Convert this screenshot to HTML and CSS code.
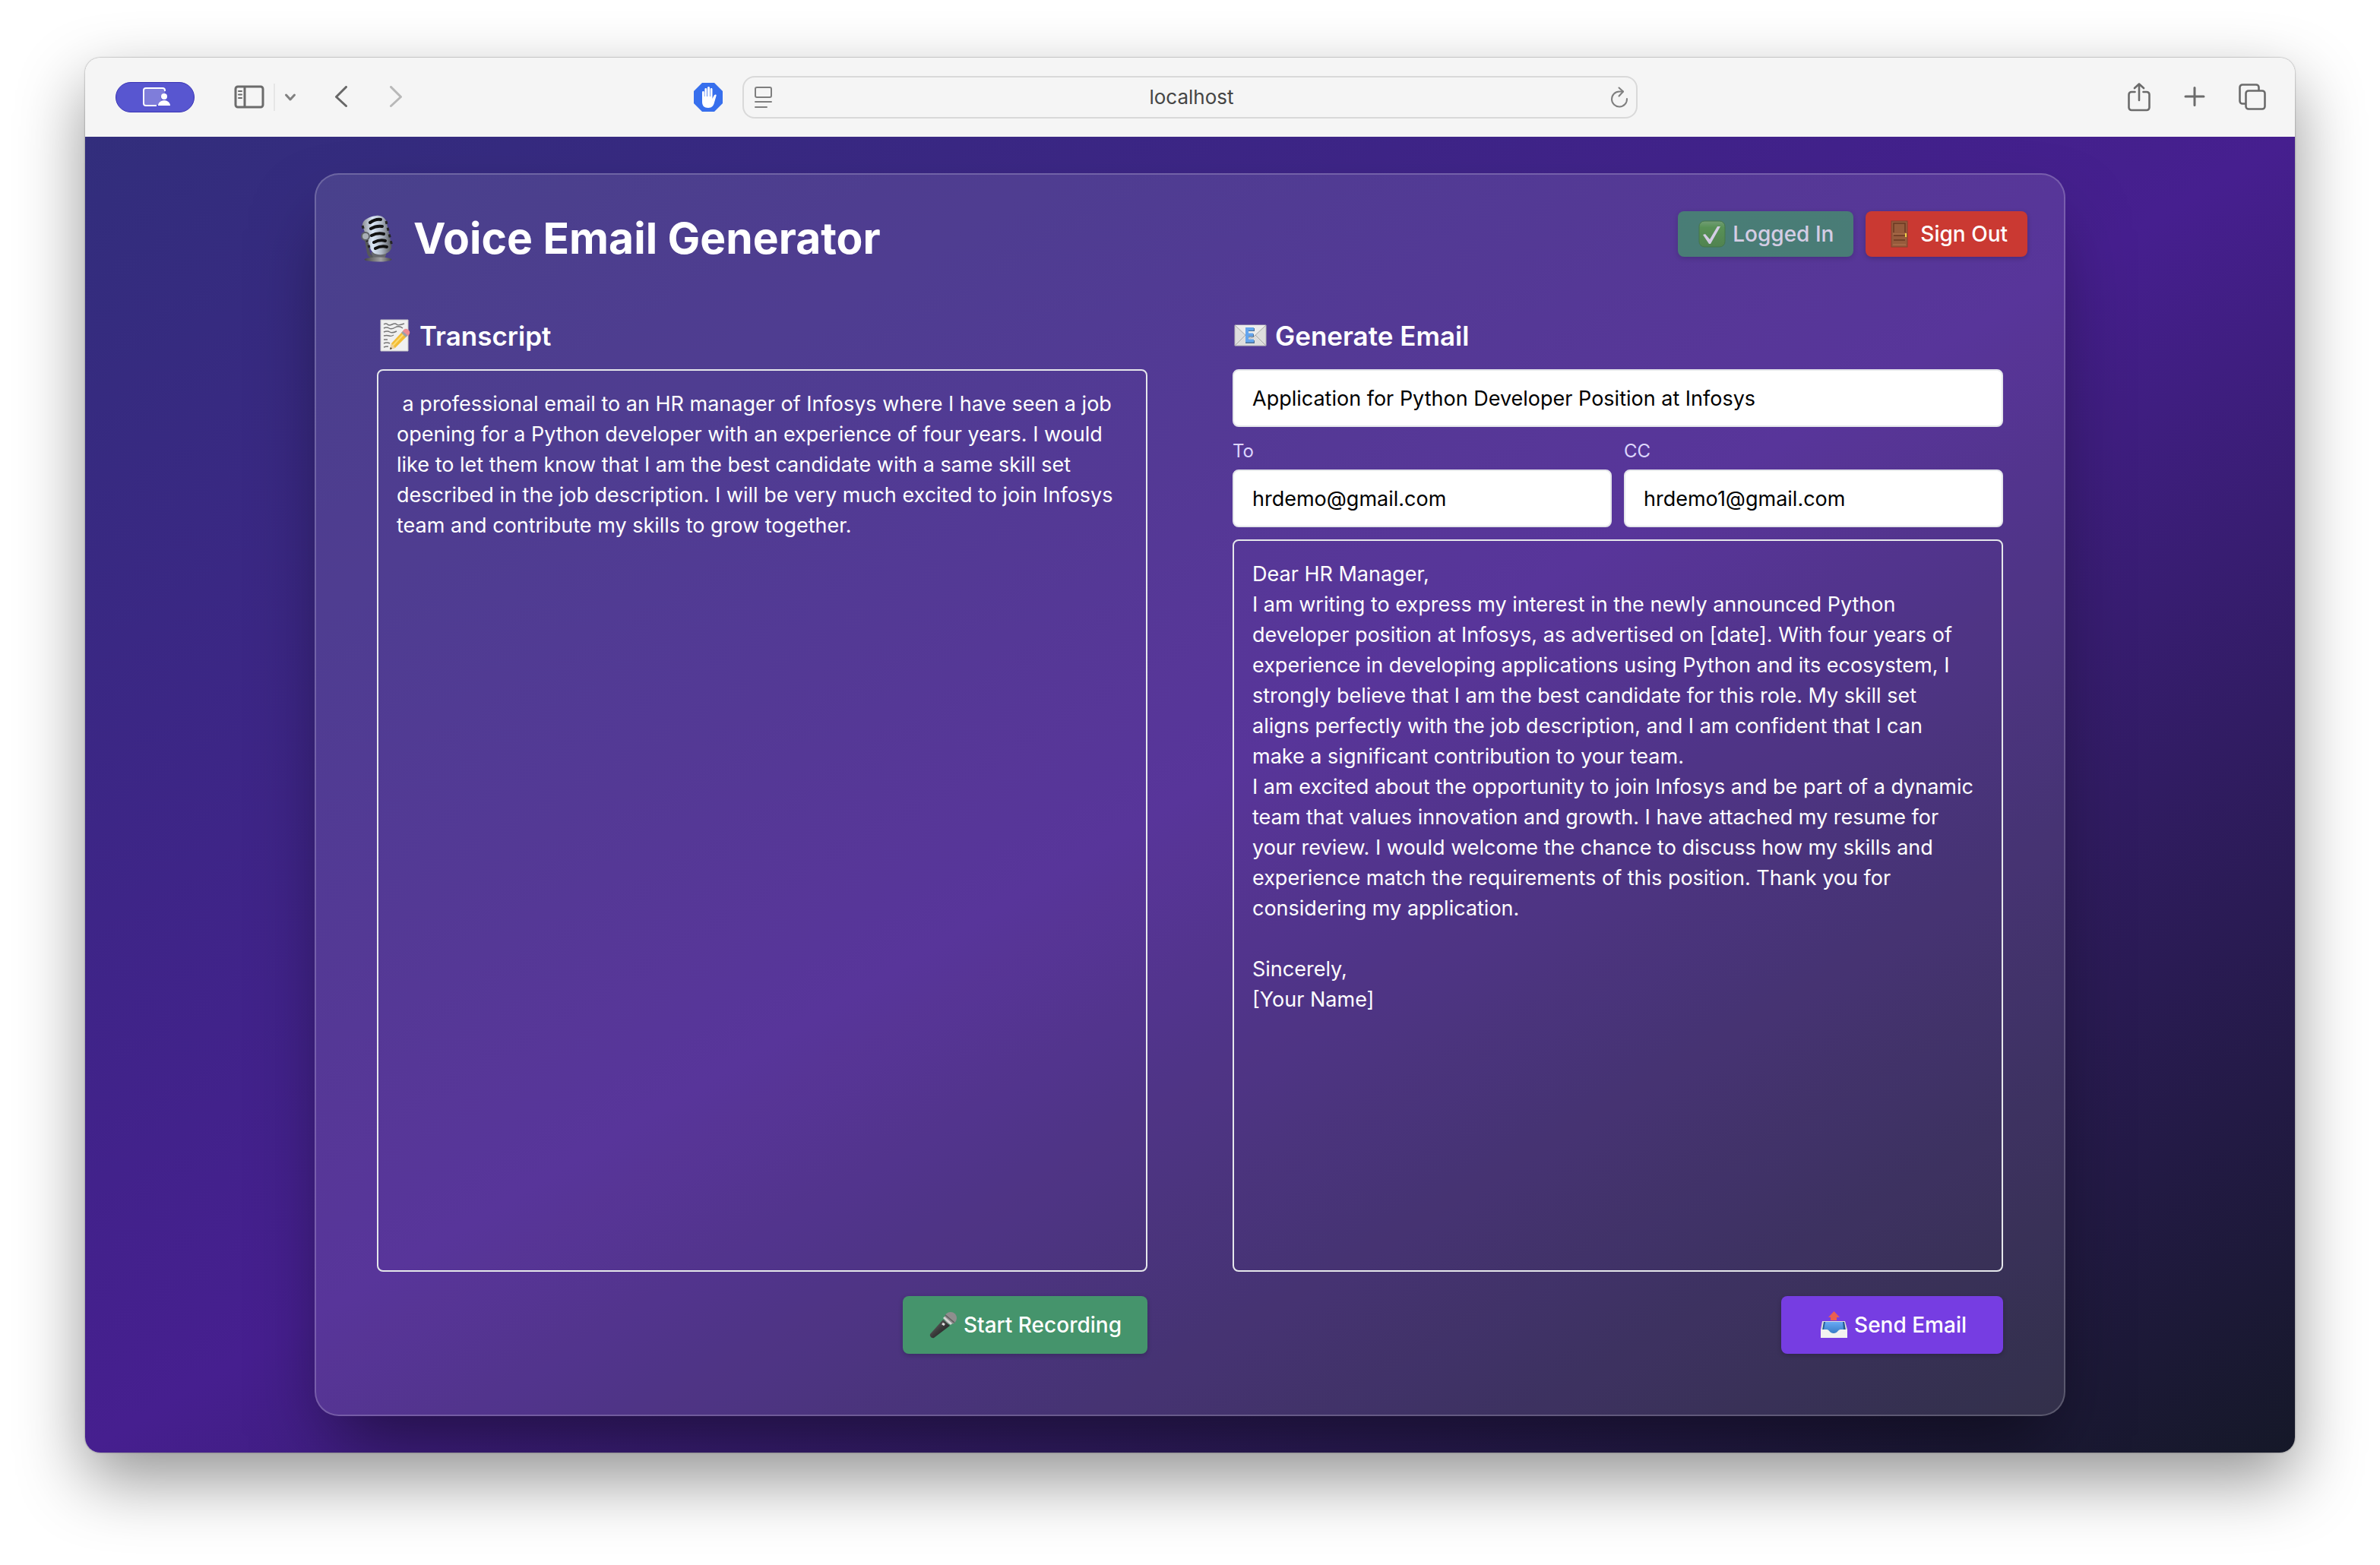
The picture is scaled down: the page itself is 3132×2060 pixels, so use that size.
FILE: index.html
```html
<!DOCTYPE html>
<html lang="en">
<head>
<meta charset="utf-8">
<title>Voice Email Generator</title>
<link rel="stylesheet" href="styles.css">
</head>
<body>
<div class="window">
  <header class="toolbar">
    <div class="toolbar-left">
      <button class="pill" type="button" aria-label="Screen sharing">
        <svg width="36" height="26" viewBox="0 0 36 26" aria-hidden="true">
          <path d="M2 4a2 2 0 0 1 2-2h23a2 2 0 0 1 2 2v4c-5 0-7 5-4 9-2 1-4 3-5 6H4a2 2 0 0 1-2-2z" fill="#7f7dda"/>
          <path d="M29 5V4a3 3 0 0 0-3-3H4a3 3 0 0 0-3 3v17a3 3 0 0 0 3 3h14" fill="none" stroke="#fff" stroke-width="2"/>
          <circle cx="28" cy="12" r="4" fill="#fff"/>
          <path d="M20 24c0-4 4-7 8-7s8 3 8 7z" fill="#fff"/>
        </svg>
      </button>
      <button class="tool sidebar" type="button" aria-label="Show sidebar">
        <svg width="40" height="32" viewBox="0 0 40 32" aria-hidden="true" fill="none" stroke="#6b6b6b" stroke-width="3">
          <rect x="2" y="2" width="36" height="27" rx="3"/><path d="M14 2v27"/>
          <path d="M6 8h4M6 12.500h4M6 17h4" stroke-width="2" stroke-linecap="round"/>
        </svg>
      </button>
      <span class="divider"></span>
      <button class="tool chevron" type="button" aria-label="Tab groups">
        <svg width="16" height="12" viewBox="0 0 16 12" aria-hidden="true" fill="none" stroke="#808080" stroke-width="3" stroke-linecap="round" stroke-linejoin="round"><path d="M2.500 3l5.500 6 5.500-6"/></svg>
      </button>
      <button class="tool back" type="button" aria-label="Back">
        <svg width="18" height="30" viewBox="0 0 18 30" aria-hidden="true" fill="none" stroke="#676767" stroke-width="3" stroke-linecap="round" stroke-linejoin="round"><path d="M15.500 1.500L2.500 14.500l13 12"/></svg>
      </button>
      <button class="tool forward" type="button" aria-label="Forward">
        <svg width="18" height="30" viewBox="0 0 18 30" aria-hidden="true" fill="none" stroke="#b8b8b8" stroke-width="3" stroke-linecap="round" stroke-linejoin="round"><path d="M2.500 1.500l13 13-13 12"/></svg>
      </button>
      <button class="tool blocker" type="button" aria-label="Content blocker">
        <svg width="38" height="38" viewBox="0 0 38 38" aria-hidden="true">
          <path d="M11 0h16l11 11v16L27 38H11L0 27V11z" fill="#376fed"/>
          <path d="M11 12.500a1.400 1.400 0 0 1 2.800 0V18h.6V8.500a1.400 1.400 0 0 1 2.800 0V18h.8V6.500a1.500 1.500 0 0 1 3 0V18h.7V8.500a1.400 1.400 0 0 1 2.800 0V21c1-2 2-5 3.500-5.500 1.200-.3 2 .4 1.600 1.500L27 26c-1 4-3 7-8 7-5.500 0-8-3-8-8z" fill="#fff"/>
        </svg>
      </button>
    </div>
    <div class="address">
      <svg width="24" height="28" viewBox="0 0 24 28" aria-hidden="true" fill="none" stroke="#7f7f7f" stroke-width="2" stroke-linecap="round">
        <rect x="1" y="1" width="21" height="13" rx="2"/><path d="M1 20h21M1 27h15"/>
      </svg>
      <input class="address-input" type="text" value="localhost" aria-label="Address">
      <button class="tool" type="button" aria-label="Reload">
        <svg width="24" height="28" viewBox="0 0 24 28" aria-hidden="true" fill="none" stroke="#7f7f7f" stroke-width="2" stroke-linecap="round" stroke-linejoin="round">
          <path d="M22 16a10 10 0 1 1-10-9.500h5"/><path d="M11.500 1.500l5.500 5-5.500 6"/>
        </svg>
      </button>
    </div>
    <div class="toolbar-right">
      <button class="tool" type="button" aria-label="Share">
        <svg width="30" height="38" viewBox="0 0 30 38" aria-hidden="true" fill="none" stroke="#6b6b6b" stroke-width="2.600" stroke-linecap="round" stroke-linejoin="round">
          <path d="M9.500 12H5A3.500 3.500 0 0 0 1.500 15.500v17A3.500 3.500 0 0 0 5 36h20a3.500 3.500 0 0 0 3.500-3.500v-17A3.500 3.500 0 0 0 25 12h-4.500"/><path d="M15 23V1.500M9 7l6-5.500L21 7"/>
        </svg>
      </button>
      <button class="tool" type="button" aria-label="New tab">
        <svg width="28" height="28" viewBox="0 0 28 28" aria-hidden="true" stroke="#6b6b6b" stroke-width="3" stroke-linecap="round"><path d="M14 1.500v23M2 13h24"/></svg>
      </button>
      <button class="tool" type="button" aria-label="Tab overview">
        <svg width="36" height="36" viewBox="0 0 36 36" aria-hidden="true" fill="none" stroke="#6b6b6b" stroke-width="2.600" stroke-linejoin="round">
          <path d="M26.500 9V5A3.500 3.500 0 0 0 23 1.500H5A3.500 3.500 0 0 0 1.500 5v18A3.500 3.500 0 0 0 5 26.500h4"/><rect x="9.500" y="9.500" width="25" height="24" rx="3.500"/>
        </svg>
      </button>
    </div>
  </header>

  <main class="page">
    <section class="card">
      <div class="card-header">
        <h1 class="title">
          <svg width="68" height="64" viewBox="0 0 68 64" aria-hidden="true">
            <defs>
              <linearGradient id="steel" x1="0" x2="1"><stop offset="0" stop-color="#8d8f94"/><stop offset=".35" stop-color="#dbe8f8"/><stop offset=".65" stop-color="#b0b9c6"/><stop offset="1" stop-color="#55575c"/></linearGradient>
              <linearGradient id="base"><stop offset="0" stop-color="#444"/><stop offset=".6" stop-color="#a2a2a4"/><stop offset="1" stop-color="#444"/></linearGradient>
            </defs>
            <path d="M18 34l3 17c1 4 5 6 9 6h6" fill="none" stroke="#55575a" stroke-width="4"/>
            <path d="M24 50l4 9h14l3-9z" fill="#66686c"/>
            <ellipse cx="33.500" cy="59.500" rx="18" ry="3" fill="url(#base)"/>
            <path d="M13 15C12 8 22 3 31 2c8-1 13 4 14 10l6 27c2 9-5 13-12 14-8 1-14-2-16-9z" fill="url(#steel)"/>
            <path d="M13 15l9 29M44 9l8 33" stroke="#242424" stroke-width="3" stroke-dasharray="4 5" fill="none"/>
            <path d="M23 11q7-5 14-4M24 19q7-4 15-3M25 28q8-4 16-2M28 37q8-4 15-2M30 45q8-4 15-2" fill="none" stroke="#111" stroke-width="4" stroke-linecap="round"/>
            <circle cx="17" cy="29" r="5" fill="#a9afb6" stroke="#5d6065" stroke-width="2"/>
          </svg>
          <span>Voice Email Generator</span>
        </h1>
        <div class="session">
          <button class="btn btn-small btn-green" type="button" disabled>
            <svg width="40" height="36" viewBox="0 0 40 36" aria-hidden="true">
              <defs><linearGradient id="tick" x2="0" y2="1"><stop offset="0" stop-color="#7cc06a"/><stop offset=".25" stop-color="#5aaf41"/><stop offset="1" stop-color="#4f9c38"/></linearGradient></defs>
              <rect x="4" y="1" width="34" height="34" rx="7" fill="url(#tick)" stroke="#3f8b33"/>
              <path d="M9 19l3-1 6 7L28 8h4L19 31h-2z" fill="#fff"/>
            </svg>
            <span>Logged In</span>
          </button>
          <button class="btn btn-small btn-red" type="button">
            <svg width="40" height="36" viewBox="0 0 40 36" aria-hidden="true">
              <rect x="10" y="1" width="21" height="34" fill="#965b3c" stroke="#80452f"/>
              <path d="M13 16V4h15v12M13 20h15M13 26h15" fill="none" stroke="#6b3a22" stroke-width="1.500"/>
              <path d="M12 18h17M12 32h17" stroke="#aa6d4a" stroke-width="1.500"/>
              <path d="M28 17h2v5h-2z" fill="#f0d246"/>
            </svg>
            <span>Sign Out</span>
          </button>
        </div>
      </div>

      <div class="columns">
        <section class="column">
          <h2 class="subtitle">
            <svg width="46" height="44" viewBox="0 0 46 44" aria-hidden="true">
              <path d="M5 1h36v41H5z" fill="#f0f0f0" stroke="#c9c9c9"/>
              <path d="M9 7q3-2 5 0t6 0 6 0 10-1M9 12q4-2 7 0t8-1 10 1M9 17q5-2 8 0t9-1M9 22q4-1 7 0t6-1M9 27h5M9 32q4-2 8 0M9 37q3-1 6-1" fill="none" stroke="#777" stroke-width="1.400"/>
              <path d="M17 40l2-8 15-16 6 6-16 16z" fill="#f3bd35"/>
              <path d="M21 35l15-16" stroke="#fbdc73" stroke-width="2"/>
              <path d="M17 40l2-8 5 6z" fill="#e9cfa1"/><path d="M17 40l1-3 2 2z" fill="#333"/>
              <path d="M32 18l3-3 6 6-3 3z" fill="#9aa1a8"/>
              <path d="M34 16c2-4 5-4 7-2 3 2 3 5 0 8z" fill="#ef8d91"/>
            </svg>
            <span>Transcript</span>
          </h2>
          <textarea class="box" aria-label="Transcript"> a professional email to an HR manager of Infosys where I have seen a job opening for a Python developer with an experience of four years. I would like to let them know that I am the best candidate with a same skill set described in the job description. I will be very much excited to join Infosys team and contribute my skills to grow together.</textarea>
          <button class="btn btn-record" type="button">
            <svg width="40" height="36" viewBox="0 0 40 36" aria-hidden="true">
              <defs><linearGradient id="handle" x2="1" y2="1"><stop offset="0" stop-color="#777"/><stop offset=".5" stop-color="#3a3a3a"/><stop offset="1" stop-color="#171717"/></linearGradient></defs>
              <path d="M4 30L21 11l9 8L9 35c-3 1-6-2-5-5z" fill="url(#handle)"/>
              <circle cx="31" cy="9" r="8" fill="#8e8e8e"/>
              <path d="M22 8l10 9" stroke="#d5d5d5" stroke-width="3"/><path d="M24 5l12 10" stroke="#5c5c5c" stroke-width="1.500"/>
              <path d="M20 16l3 2" stroke="#ddd" stroke-width="3"/>
            </svg>
            <span>Start Recording</span>
          </button>
        </section>

        <section class="column">
          <h2 class="subtitle">
            <svg width="46" height="44" viewBox="0 0 46 44" aria-hidden="true">
              <path d="M3 8h41v27H3z" fill="#dedede" stroke="#b9b9b9"/>
              <path d="M3 8l17 16q3 2 7 0L44 8M3 35l14-14M44 35L30 21" fill="#ececec" stroke="#a9a9a9"/>
              <path d="M29 14H19v16h10M19 21.500h9" fill="none" stroke="#4f6f93" stroke-width="4"/>
              <path d="M28 13H19v15.500h9M19 20.500h8" fill="none" stroke="#64a5ee" stroke-width="4"/>
            </svg>
            <span>Generate Email</span>
          </h2>
          <input class="field" type="text" value="Application for Python Developer Position at Infosys" aria-label="Subject">
          <div class="recipients">
            <div class="recipient">
              <label class="label" for="to">To</label>
              <input class="field" id="to" type="email" value="hrdemo@gmail.com">
            </div>
            <div class="recipient">
              <label class="label" for="cc">CC</label>
              <input class="field" id="cc" type="email" value="hrdemo1@gmail.com">
            </div>
          </div>
          <textarea class="box" aria-label="Email body">Dear HR Manager,
I am writing to express my interest in the newly announced Python developer position at Infosys, as advertised on [date]. With four years of experience in developing applications using Python and its ecosystem, I strongly believe that I am the best candidate for this role. My skill set aligns perfectly with the job description, and I am confident that I can make a significant contribution to your team.
I am excited about the opportunity to join Infosys and be part of a dynamic team that values innovation and growth. I have attached my resume for your review. I would welcome the chance to discuss how my skills and experience match the requirements of this position. Thank you for considering my application.

Sincerely,
[Your Name]</textarea>
          <button class="btn btn-send" type="button">
            <svg width="40" height="36" viewBox="0 0 40 36" aria-hidden="true">
              <defs><linearGradient id="tray" x2="0" y2="1"><stop offset="0" stop-color="#68a9f5"/><stop offset="1" stop-color="#3579c4"/></linearGradient></defs>
              <path d="M6 13h30l3 11v11H4V24z" fill="#dededb"/>
              <path d="M8 14h27l2 11-8 5H14l-8-5z" fill="#245a94"/>
              <path d="M10 14h23l1 10-6 6H15l-7-6z" fill="url(#tray)"/>
              <path d="M4 24h8c3 0 4 5 9 5s6-5 9-5h9v11H4z" fill="#f2f2f0"/>
              <path d="M21.500 0L29 8h-4v4h-8V8h-3z" fill="#ea5f50"/>
            </svg>
            <span>Send Email</span>
          </button>
        </section>
      </div>
    </section>
  </main>
</div>
</body>
</html>
```
FILE: styles.css
```css
* {
  box-sizing: border-box;
}

body {
  margin: 0;
  min-height: 100vh;
  padding: 76px 112px 148px;
  display: flex;
  background: #fff;
  font-family: Inter, "Liberation Sans", sans-serif;
  font-size: 27px;
  line-height: 40px;
  color: #fff;
}

button,
input,
textarea {
  margin: 0;
  font: inherit;
}

svg {
  display: block;
  flex: none;
}

.window {
  flex: 1;
  min-width: 0;
  display: flex;
  flex-direction: column;
  border-radius: 20px;
  overflow: hidden;
  box-shadow: 0 0 2px rgba(0, 0, 0, 0.5), 0 36px 88px rgba(0, 0, 0, 0.42);
}

/* Browser toolbar */

.toolbar {
  height: 104px;
  display: grid;
  grid-template-columns: minmax(0, 1fr) minmax(0, 1178px) minmax(0, 1fr);
  align-items: center;
  background: #f5f5f5;
}

.toolbar-left,
.toolbar-right {
  display: flex;
  align-items: center;
}

.toolbar-left {
  padding: 0 26px 0 40px;
}

.toolbar-right {
  justify-content: flex-end;
  gap: 44px;
  padding-right: 38px;
}

.tool {
  padding: 0;
  border: 0;
  background: none;
}

.pill {
  width: 104px;
  height: 40px;
  padding: 0 0 0 4px;
  display: flex;
  align-items: center;
  justify-content: center;
  border: 1px solid #3a35b5;
  border-radius: 20px;
  background: #5856d0;
}

.sidebar {
  margin-left: 52px;
}

.divider {
  width: 2px;
  height: 36px;
  margin: 0 12px;
  background: #e6e6e6;
}

.back {
  margin-left: 50px;
}

.forward {
  margin-left: 54px;
}

.blocker {
  margin-left: auto;
}

.address {
  height: 56px;
  padding: 0 10px 0 14px;
  display: flex;
  align-items: center;
  border: 2px solid #d9d9d9;
  border-radius: 16px;
}

.address-input {
  flex: 1;
  min-width: 0;
  padding: 0;
  border: 0;
  background: none;
  color: #454545;
  font-size: 26px;
  text-align: center;
}

/* Page */

.page {
  flex: 1;
  display: flex;
  justify-content: center;
  padding: 48px;
  background: linear-gradient(to bottom right, #322e7c, #461f8f, #151828);
}

.card {
  flex: 1;
  min-width: 0;
  max-width: 2304px;
  padding: 48px;
  display: flex;
  flex-direction: column;
  gap: 64px;
  border: 2px solid rgba(255, 255, 255, 0.2);
  border-radius: 32px;
  background: rgba(255, 255, 255, 0.1);
  box-shadow: 0 50px 100px -24px rgba(0, 0, 0, 0.5);
}

.card-header {
  display: flex;
  align-items: flex-start;
  justify-content: space-between;
}

.title,
.subtitle {
  margin: 0;
  display: flex;
  align-items: center;
}

.title {
  gap: 12px;
  font-size: 57px;
  line-height: 72px;
  font-weight: 700;
}

.subtitle {
  gap: 10px;
  margin-bottom: 16px;
  font-size: 35px;
  line-height: 56px;
  font-weight: 600;
}

.session {
  display: flex;
  gap: 16px;
}

.columns {
  flex: 1;
  display: grid;
  grid-template-columns: repeat(2, minmax(0, 1fr));
  gap: 112px;
  padding: 0 32px 32px;
}

.column {
  display: flex;
  flex-direction: column;
}

.box {
  flex: 1;
  width: 100%;
  padding: 24px 32px 24px 24px;
  border: 2px solid #e5e7eb;
  border-radius: 8px;
  background: none;
  color: #fff;
  resize: none;
  overflow: hidden;
}

.field {
  width: 100%;
  height: 76px;
  padding: 0 24px;
  border: 2px solid #e5e7eb;
  border-radius: 8px;
  background: #fff;
  color: #000;
}

.recipients {
  display: grid;
  grid-template-columns: repeat(2, minmax(0, 1fr));
  gap: 16px;
  margin: 16px 0;
}

.label {
  display: block;
  margin-bottom: 8px;
  color: #ddd6fe;
  font-size: 24px;
  line-height: 32px;
}

.btn {
  height: 76px;
  display: flex;
  align-items: center;
  justify-content: center;
  gap: 8px;
  border: 0;
  border-radius: 8px;
  color: #fff;
  font-size: 28px;
  font-weight: 500;
  white-space: nowrap;
  box-shadow: 0 2px 6px rgba(0, 0, 0, 0.2);
}

.btn-small {
  height: 60px;
  padding: 0 26px 0 24px;
}

.btn-green {
  background: #45946c;
  opacity: 0.75;
}

.btn-red {
  background: #ca3932;
}

.btn-record,
.btn-send {
  align-self: flex-end;
  margin-top: 32px;
}

.btn-record {
  padding: 0 34px 0 32px;
  background: #45946c;
}

.btn-send {
  padding: 0 48px;
  background: #763de2;
}
```
